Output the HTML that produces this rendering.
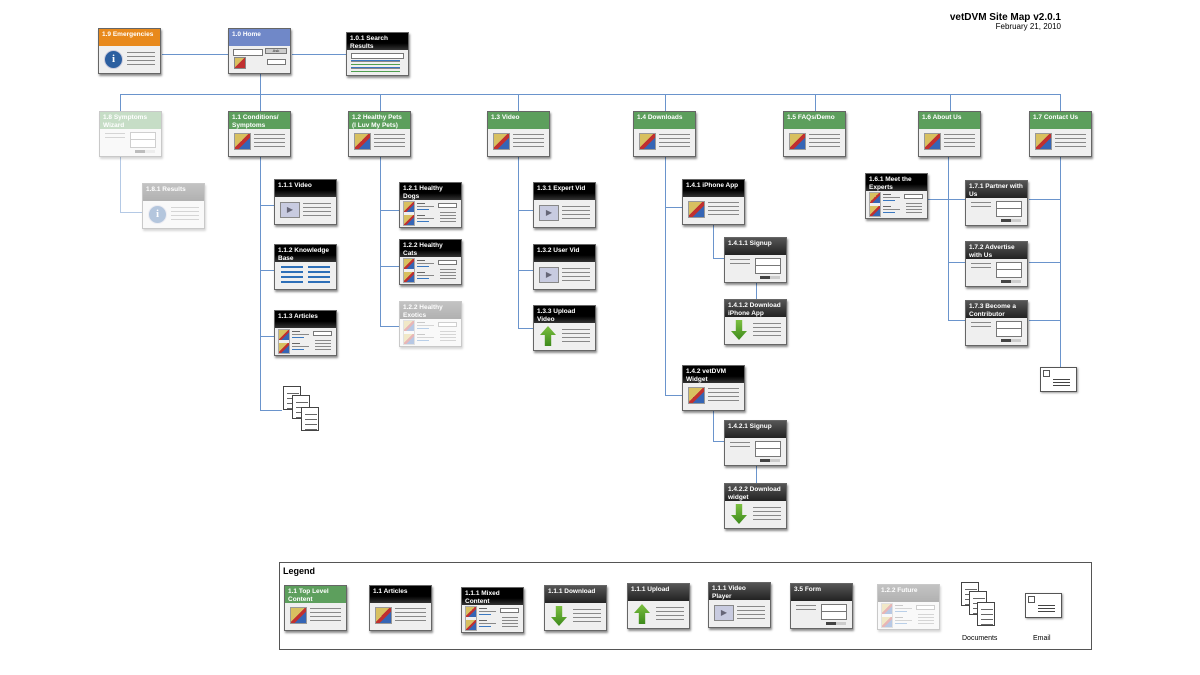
<!DOCTYPE html>
<html><head><meta charset="utf-8"><style>
*{margin:0;padding:0;box-sizing:border-box}
body{width:1200px;height:675px;background:#fff;position:relative;overflow:hidden;font-family:"Liberation Sans",sans-serif}
.c{position:absolute;width:63px;height:46px;background:#efefef;border:1px solid #666;box-shadow:1px 2px 2px rgba(0,0,0,.45)}
.h{height:17px;color:#fff;font-size:6.5px;font-weight:bold;line-height:7.5px;padding:2px 3px;overflow:hidden;background:linear-gradient(#000,#000 60%,#333)}
.g .h{background:#5d9f5d}.o .h{background:#e8891c}.bl .h{background:#7088c8}.gr .h{background:linear-gradient(#555,#222)}
.f{opacity:.35}
.bd{position:absolute;left:0;right:0;top:17px;bottom:0}
.img::before{content:'';position:absolute;left:5px;top:4px;width:15px;height:15px;border:1px solid #999;background:linear-gradient(135deg,#d8c060 45%,#c03030 45% 62%,#3565b5 62%)}
.img::after{content:'';position:absolute;left:25px;right:5px;top:5px;height:15px;background:repeating-linear-gradient(#888 0 1px,transparent 1px 4px)}
.mix::before{content:'';position:absolute;left:4px;top:2px;width:10px;height:23px;background:linear-gradient(135deg,#d8c060 45%,#c03030 45% 62%,#3565b5 62%) 0 0/10px 10px no-repeat,linear-gradient(135deg,#d8c060 45%,#c03030 45% 62%,#3565b5 62%) 0 13px/10px 10px no-repeat;outline:1px solid #aaa}
.mix::after{content:'';position:absolute;left:17px;width:17px;top:3px;height:22px;background:linear-gradient(#666,#666) 0 0/8px 1px no-repeat,linear-gradient(#888,#888) 0 3px/17px 1px no-repeat,linear-gradient(#3a78c0,#3a78c0) 0 6px/12px 1px no-repeat,linear-gradient(#666,#666) 0 12px/8px 1px no-repeat,linear-gradient(#888,#888) 0 15px/17px 1px no-repeat,linear-gradient(#3a78c0,#3a78c0) 0 18px/12px 1px no-repeat}
.mix i{position:absolute;left:38px;right:4px;top:3px;height:5px;border:1px solid #777;background:#fff}
.mix b{position:absolute;left:40px;right:5px;top:12px;height:12px;background:repeating-linear-gradient(#888 0 1px,transparent 1px 3px)}
.vid::before{content:'▶';position:absolute;left:5px;top:5px;width:18px;height:14px;background:#c8cbe0;border:1px solid #888;color:#667;font-size:8px;text-align:center;line-height:13px}
.vid::after,.dl::after,.frm::after,.inf::after{content:'';position:absolute;left:28px;right:5px;top:6px;height:13px;background:repeating-linear-gradient(#888 0 1px,transparent 1px 4px)}
.dl::before,.ul::before{content:'';position:absolute;left:6px;top:3px;width:16px;height:20px;background:linear-gradient(#7cc040,#3d8a1c);clip-path:polygon(30% 0,70% 0,70% 55%,100% 55%,50% 100%,0 55%,30% 55%)}
.ul::before{clip-path:polygon(50% 0,100% 45%,70% 45%,70% 100%,30% 100%,30% 45%,0 45%)}
.ul::after{content:'';position:absolute;left:28px;right:5px;top:6px;height:13px;background:repeating-linear-gradient(#888 0 1px,transparent 1px 4px)}
.frm::before{content:'';position:absolute;left:30px;right:5px;top:3px;height:14px;border:1px solid #777;background:linear-gradient(#777,#777) 0 6px/100% 1px no-repeat,#fff}
.frm::after{left:5px;right:auto;width:20px;top:4px;height:8px}
.frm i{position:absolute;right:6px;bottom:3px;width:20px;height:3px;background:linear-gradient(90deg,#444 50%,#ccc 50%)}
.kb::after{content:'';position:absolute;left:6px;right:6px;top:4px;height:18px;background:repeating-linear-gradient(#2d6fb8 0 2px,transparent 2px 5px);-webkit-mask:linear-gradient(90deg,#000 45%,transparent 45% 55%,#000 55%)}
.inf::before{content:'i';position:absolute;left:5px;top:4px;width:17px;height:17px;border-radius:50%;background:#2c5fa0;color:#fff;font:bold 11px/17px "Liberation Serif",serif;text-align:center;border:1px solid #ccd}
.srch::before{content:'';position:absolute;left:4px;right:4px;top:3px;height:4px;border:1px solid #777;background:#fff}
.srch::after{content:'';position:absolute;left:4px;right:8px;top:10px;height:14px;background:repeating-linear-gradient(#3a78c0 0 1px,#888 1px 2px,transparent 2px 4px,#50a050 4px 5px,transparent 5px 7px)}
.hm::before{content:'';position:absolute;left:4px;top:3px;width:28px;height:5px;border:1px solid #777;background:#fff}
.hm::after{content:'';position:absolute;left:5px;top:11px;width:10px;height:10px;border:1px solid #888;background:linear-gradient(135deg,#d8c060 45%,#c03030 45%)}
.hm i{position:absolute;left:36px;top:2px;width:22px;height:6px;background:#ccc;border:1px solid #777;font:normal 4px/4px sans-serif;text-align:center;color:#222;font-style:normal}
.hm b{position:absolute;left:38px;top:13px;width:19px;height:6px;border:1px solid #777;background:#fff}
.ln{position:absolute;background:#6a94cc}
.doc{position:absolute;width:18px;height:24px;background:repeating-linear-gradient(transparent 0 4px,#666 4px 5px) 3px 2px/12px 20px no-repeat,#fff;border:1px solid #444}
.env{position:absolute;width:37px;height:25px;border:1px solid #555;background:#fff;box-shadow:1px 1px 2px rgba(0,0,0,.4)}
.env::before{content:'';position:absolute;left:2px;top:2px;width:5px;height:5px;border:1px solid #555}
.env::after{content:'';position:absolute;left:12px;right:6px;top:11px;height:9px;background:repeating-linear-gradient(#444 0 1px,transparent 1px 3px)}
.t{position:absolute;font-size:7px;color:#000}
</style></head><body>
<div class="t" style="right:139px;top:12px;font-size:10px;font-weight:bold">vetDVM Site Map v2.0.1</div>
<div class="t" style="right:139px;top:22px;font-size:8px">February 21, 2010</div>

<div class="ln" style="left:162px;top:54px;width:66px;height:1px"></div>
<div class="ln" style="left:292px;top:54px;width:54px;height:1px"></div>
<div class="ln" style="left:260px;top:74px;width:1px;height:37px"></div>
<div class="ln" style="left:120px;top:94px;width:941px;height:1px"></div>
<div class="ln" style="left:120px;top:94px;width:1px;height:17px"></div>
<div class="ln" style="left:380px;top:94px;width:1px;height:17px"></div>
<div class="ln" style="left:518px;top:94px;width:1px;height:17px"></div>
<div class="ln" style="left:665px;top:94px;width:1px;height:17px"></div>
<div class="ln" style="left:815px;top:94px;width:1px;height:17px"></div>
<div class="ln" style="left:950px;top:94px;width:1px;height:17px"></div>
<div class="ln" style="left:1060px;top:94px;width:1px;height:17px"></div>
<div class="ln" style="left:120px;top:157px;width:1px;height:55px;opacity:.5"></div>
<div class="ln" style="left:120px;top:212px;width:22px;height:1px;opacity:.5"></div>
<div class="ln" style="left:260px;top:157px;width:1px;height:253px"></div>
<div class="ln" style="left:260px;top:205px;width:14px;height:1px"></div>
<div class="ln" style="left:260px;top:270px;width:14px;height:1px"></div>
<div class="ln" style="left:260px;top:336px;width:14px;height:1px"></div>
<div class="ln" style="left:260px;top:410px;width:22px;height:1px"></div>
<div class="ln" style="left:380px;top:157px;width:1px;height:169px"></div>
<div class="ln" style="left:380px;top:210px;width:19px;height:1px"></div>
<div class="ln" style="left:380px;top:266px;width:19px;height:1px"></div>
<div class="ln" style="left:380px;top:326px;width:19px;height:1px"></div>
<div class="ln" style="left:518px;top:157px;width:1px;height:171px"></div>
<div class="ln" style="left:518px;top:210px;width:15px;height:1px"></div>
<div class="ln" style="left:518px;top:270px;width:15px;height:1px"></div>
<div class="ln" style="left:518px;top:328px;width:15px;height:1px"></div>
<div class="ln" style="left:665px;top:157px;width:1px;height:238px"></div>
<div class="ln" style="left:665px;top:207px;width:17px;height:1px"></div>
<div class="ln" style="left:665px;top:395px;width:17px;height:1px"></div>
<div class="ln" style="left:713px;top:225px;width:1px;height:33px"></div>
<div class="ln" style="left:713px;top:258px;width:11px;height:1px"></div>
<div class="ln" style="left:756px;top:277px;width:1px;height:22px"></div>
<div class="ln" style="left:713px;top:411px;width:1px;height:30px"></div>
<div class="ln" style="left:713px;top:441px;width:11px;height:1px"></div>
<div class="ln" style="left:756px;top:460px;width:1px;height:23px"></div>
<div class="ln" style="left:948px;top:157px;width:1px;height:163px"></div>
<div class="ln" style="left:928px;top:199px;width:37px;height:1px"></div>
<div class="ln" style="left:948px;top:262px;width:17px;height:1px"></div>
<div class="ln" style="left:948px;top:320px;width:17px;height:1px"></div>
<div class="ln" style="left:1060px;top:157px;width:1px;height:210px"></div>
<div class="ln" style="left:1029px;top:199px;width:31px;height:1px"></div>
<div class="ln" style="left:1029px;top:262px;width:31px;height:1px"></div>
<div class="ln" style="left:1029px;top:320px;width:31px;height:1px"></div>

<div class="c o" style="left:98px;top:28px"><div class="h">1.9 Emergencies</div><div class="bd inf"></div></div>
<div class="c bl" style="left:228px;top:28px"><div class="h">1.0 Home</div><div class="bd hm"><i>Ask</i><b></b></div></div>
<div class="c" style="left:346px;top:32px;height:44px"><div class="h">1.0.1 Search Results</div><div class="bd srch"></div></div>

<div class="c g f" style="left:99px;top:111px"><div class="h">1.8 Symptoms Wizard</div><div class="bd frm"><i></i></div></div>
<div class="c g" style="left:228px;top:111px"><div class="h">1.1 Conditions/ Symptoms</div><div class="bd img"></div></div>
<div class="c g" style="left:348px;top:111px"><div class="h">1.2 Healthy Pets (I Luv My Pets)</div><div class="bd img"></div></div>
<div class="c g" style="left:487px;top:111px"><div class="h">1.3 Video</div><div class="bd img"></div></div>
<div class="c g" style="left:633px;top:111px"><div class="h">1.4 Downloads</div><div class="bd img"></div></div>
<div class="c g" style="left:783px;top:111px"><div class="h">1.5 FAQs/Demo</div><div class="bd img"></div></div>
<div class="c g" style="left:918px;top:111px"><div class="h">1.6 About Us</div><div class="bd img"></div></div>
<div class="c g" style="left:1029px;top:111px"><div class="h">1.7 Contact Us</div><div class="bd img"></div></div>

<div class="c gr f" style="left:142px;top:183px"><div class="h">1.8.1 Results</div><div class="bd inf"></div></div>
<div class="c" style="left:274px;top:179px"><div class="h">1.1.1 Video</div><div class="bd vid"></div></div>
<div class="c" style="left:274px;top:244px"><div class="h">1.1.2 Knowledge Base</div><div class="bd kb"></div></div>
<div class="c" style="left:274px;top:310px"><div class="h">1.1.3 Articles</div><div class="bd mix"><i></i><b></b></div></div>
<div class="doc" style="left:283px;top:386px"></div><div class="doc" style="left:292px;top:395px"></div><div class="doc" style="left:301px;top:407px"></div>

<div class="c" style="left:399px;top:182px"><div class="h">1.2.1 Healthy Dogs</div><div class="bd mix"><i></i><b></b></div></div>
<div class="c" style="left:399px;top:239px"><div class="h">1.2.2 Healthy Cats</div><div class="bd mix"><i></i><b></b></div></div>
<div class="c gr f" style="left:399px;top:301px"><div class="h">1.2.2 Healthy Exotics</div><div class="bd mix"><i></i><b></b></div></div>

<div class="c" style="left:533px;top:182px"><div class="h">1.3.1 Expert Vid</div><div class="bd vid"></div></div>
<div class="c" style="left:533px;top:244px"><div class="h">1.3.2 User Vid</div><div class="bd vid"></div></div>
<div class="c" style="left:533px;top:305px"><div class="h">1.3.3 Upload Video</div><div class="bd ul"></div></div>

<div class="c" style="left:682px;top:179px"><div class="h">1.4.1 iPhone App</div><div class="bd img"></div></div>
<div class="c gr" style="left:724px;top:237px"><div class="h">1.4.1.1 Signup</div><div class="bd frm"><i></i></div></div>
<div class="c gr" style="left:724px;top:299px"><div class="h">1.4.1.2 Download iPhone App</div><div class="bd dl"></div></div>
<div class="c" style="left:682px;top:365px"><div class="h">1.4.2 vetDVM Widget</div><div class="bd img"></div></div>
<div class="c gr" style="left:724px;top:420px"><div class="h">1.4.2.1 Signup</div><div class="bd frm"><i></i></div></div>
<div class="c gr" style="left:724px;top:483px"><div class="h">1.4.2.2 Download widget</div><div class="bd dl"></div></div>

<div class="c" style="left:865px;top:173px"><div class="h">1.6.1 Meet the Experts</div><div class="bd mix"><i></i><b></b></div></div>
<div class="c gr" style="left:965px;top:180px"><div class="h">1.7.1 Partner with Us</div><div class="bd frm"><i></i></div></div>
<div class="c gr" style="left:965px;top:241px"><div class="h">1.7.2 Advertise with Us</div><div class="bd frm"><i></i></div></div>
<div class="c gr" style="left:965px;top:300px"><div class="h">1.7.3 Become a Contributor</div><div class="bd frm"><i></i></div></div>
<div class="env" style="left:1040px;top:367px"></div>

<div style="position:absolute;left:279px;top:562px;width:813px;height:88px;border:1px solid #555"></div>
<div class="t" style="left:283px;top:566px;font-size:9px;font-weight:bold">Legend</div>
<div class="c g" style="left:284px;top:585px"><div class="h">1.1 Top Level Content</div><div class="bd img"></div></div>
<div class="c" style="left:369px;top:585px"><div class="h">1.1 Articles</div><div class="bd img"></div></div>
<div class="c" style="left:461px;top:587px"><div class="h">1.1.1 Mixed Content</div><div class="bd mix"><i></i><b></b></div></div>
<div class="c gr" style="left:544px;top:585px"><div class="h">1.1.1 Download</div><div class="bd dl"></div></div>
<div class="c gr" style="left:627px;top:583px"><div class="h">1.1.1 Upload</div><div class="bd ul"></div></div>
<div class="c gr" style="left:708px;top:582px"><div class="h">1.1.1 Video Player</div><div class="bd vid"></div></div>
<div class="c gr" style="left:790px;top:583px"><div class="h">3.5 Form</div><div class="bd frm"><i></i></div></div>
<div class="c gr f" style="left:877px;top:584px"><div class="h">1.2.2 Future</div><div class="bd mix"><i></i><b></b></div></div>
<div class="doc" style="left:961px;top:582px"></div><div class="doc" style="left:969px;top:591px"></div><div class="doc" style="left:977px;top:602px"></div>
<div class="t" style="left:962px;top:635px">Documents</div>
<div class="env" style="left:1025px;top:593px"></div>
<div class="t" style="left:1033px;top:635px">Email</div>
</body></html>
